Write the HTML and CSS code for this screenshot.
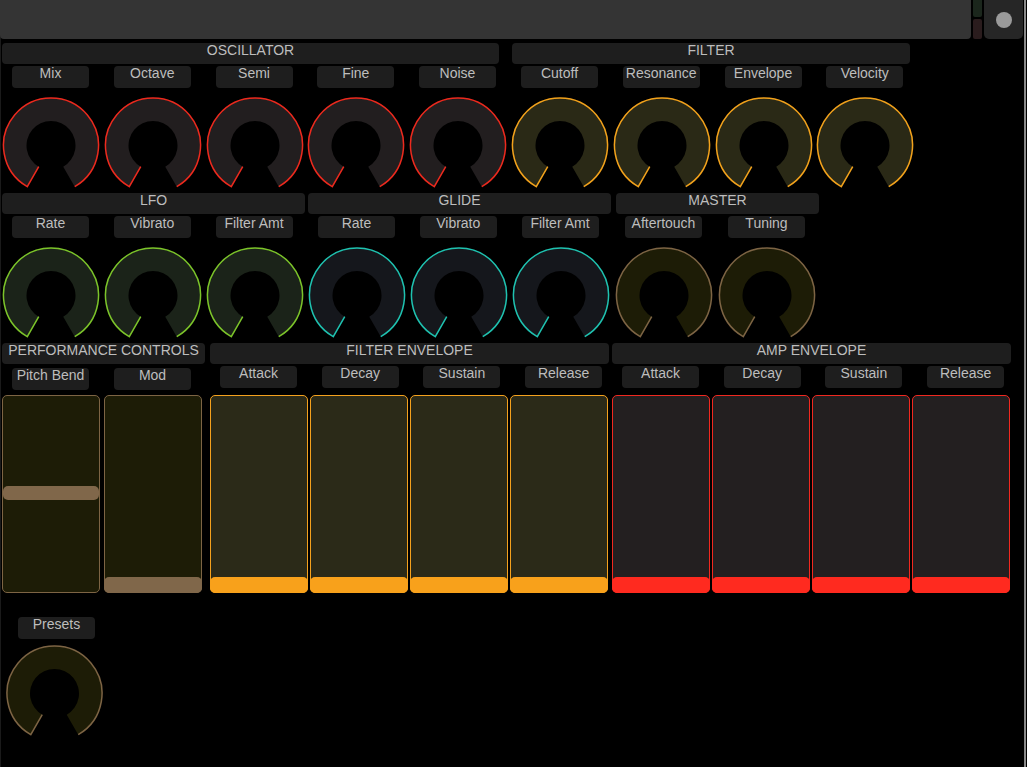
FILE: index.html
```html
<!DOCTYPE html>
<html lang="en">
<head>
    <meta charset="UTF-8">
    <meta name="viewport" content="width=device-width, initial-scale=1.0">
    <title>Synth Control Surface</title>
    <link rel="stylesheet" href="styles.css">
</head>
<body>
    <!-- forma del knob, se reutiliza con <use> -->
    <svg class="defs" aria-hidden="true">
        <symbol id="knob" viewBox="0 0 98 92">
            <path d="M36.75 69.72 L25.25 89.64 A47.5 47.5 0 1 1 72.75 89.64 L61.25 69.72 A24.5 24.5 0 1 0 36.75 69.72 Z"/>
            <path class="knob-edge" d="M36.75 69.72 L25.25 89.64 A47.5 47.5 0 1 1 72.75 89.64" fill="none" stroke="currentColor" stroke-width="1.5"/>
        </symbol>
    </svg>

    <div class="page">
        <div class="topbar">
            <div class="display"></div>
            <div class="meter"><span class="meter-top"></span><span class="meter-bottom"></span></div>
            <div class="power"><span class="dot"></span></div>
        </div>

        <!-- fila 1 -->
        <div class="row">
            <section class="group">
                <div class="header w-osc">OSCILLATOR</div>
                <div class="cells">
                    <div class="cell"><div class="label">Mix</div><svg class="knob red"><use href="#knob"/></svg></div>
                    <div class="cell"><div class="label">Octave</div><svg class="knob red"><use href="#knob"/></svg></div>
                    <div class="cell"><div class="label">Semi</div><svg class="knob red"><use href="#knob"/></svg></div>
                    <div class="cell"><div class="label">Fine</div><svg class="knob red"><use href="#knob"/></svg></div>
                    <div class="cell"><div class="label">Noise</div><svg class="knob red"><use href="#knob"/></svg></div>
                </div>
            </section>
            <section class="group group-filter">
                <div class="header w-filter">FILTER</div>
                <div class="cells">
                    <div class="cell"><div class="label">Cutoff</div><svg class="knob orange"><use href="#knob"/></svg></div>
                    <div class="cell"><div class="label">Resonance</div><svg class="knob orange"><use href="#knob"/></svg></div>
                    <div class="cell"><div class="label">Envelope</div><svg class="knob orange"><use href="#knob"/></svg></div>
                    <div class="cell"><div class="label">Velocity</div><svg class="knob orange"><use href="#knob"/></svg></div>
                </div>
            </section>
        </div>

        <!-- fila 2 -->
        <div class="row">
            <section class="group">
                <div class="header w-303">LFO</div>
                <div class="cells">
                    <div class="cell"><div class="label">Rate</div><svg class="knob green"><use href="#knob"/></svg></div>
                    <div class="cell"><div class="label">Vibrato</div><svg class="knob green"><use href="#knob"/></svg></div>
                    <div class="cell"><div class="label">Filter Amt</div><svg class="knob green"><use href="#knob"/></svg></div>
                </div>
            </section>
            <section class="group group-glide">
                <div class="header w-303">GLIDE</div>
                <div class="cells">
                    <div class="cell"><div class="label">Rate</div><svg class="knob cyan"><use href="#knob"/></svg></div>
                    <div class="cell"><div class="label">Vibrato</div><svg class="knob cyan"><use href="#knob"/></svg></div>
                    <div class="cell"><div class="label">Filter Amt</div><svg class="knob cyan"><use href="#knob"/></svg></div>
                </div>
            </section>
            <section class="group group-master">
                <div class="header w-master">MASTER</div>
                <div class="cells wide">
                    <div class="cell"><div class="label">Aftertouch</div><svg class="knob brown"><use href="#knob"/></svg></div>
                    <div class="cell"><div class="label">Tuning</div><svg class="knob brown"><use href="#knob"/></svg></div>
                </div>
            </section>
        </div>

        <!-- fila 3: faders -->
        <div class="row">
            <section class="group">
                <div class="header w-203">PERFORMANCE CONTROLS</div>
                <div class="cells perf">
                    <div class="cell">
                        <div class="label">Pitch Bend</div>
                        <div class="fader brown center"><span class="handle"></span></div>
                    </div>
                    <div class="cell">
                        <div class="label">Mod</div>
                        <div class="fader brown"><span class="bar"></span></div>
                    </div>
                </div>
            </section>
            <section class="group group-fenv">
                <div class="header w-399">FILTER ENVELOPE</div>
                <div class="labels">
                    <div class="label">Attack</div>
                    <div class="label">Decay</div>
                    <div class="label">Sustain</div>
                    <div class="label">Release</div>
                </div>
                <div class="faders">
                    <div class="fader orange"><span class="bar"></span></div>
                    <div class="fader orange"><span class="bar"></span></div>
                    <div class="fader orange"><span class="bar"></span></div>
                    <div class="fader orange"><span class="bar"></span></div>
                </div>
            </section>
            <section class="group group-aenv">
                <div class="header w-399">AMP ENVELOPE</div>
                <div class="labels">
                    <div class="label">Attack</div>
                    <div class="label">Decay</div>
                    <div class="label">Sustain</div>
                    <div class="label">Release</div>
                </div>
                <div class="faders">
                    <div class="fader red"><span class="bar"></span></div>
                    <div class="fader red"><span class="bar"></span></div>
                    <div class="fader red"><span class="bar"></span></div>
                    <div class="fader red"><span class="bar"></span></div>
                </div>
            </section>
        </div>

        <!-- presets -->
        <div class="presets">
            <div class="label">Presets</div>
            <svg class="knob brown"><use href="#knob"/></svg>
        </div>
    </div>
</body>
</html>
```

FILE: styles.css
```css
* {
    box-sizing: border-box;
}
body, html {
    margin: 0;
    padding: 0;
    background-color: #000;
}
body {
    font-family: "Liberation Sans", Arial, sans-serif;
    font-size: 14px;
    color: #bdbdbd;
    overflow: hidden;
}
.defs {
    position: absolute;
    width: 0;
    height: 0;
}
.page {
    width: 1026px;
    min-height: 767px;
    border-left: 1px solid #1a1a1a;
    border-right: 2px solid #8a8a8a;
    padding-left: 1px;
}

/* Barra superior */
.topbar {
    display: flex;
    height: 39px;
    margin-left: -2px;
}
.display {
    width: 971px;
    background-color: #343434;
    border-radius: 0 0 4px 4px;
}
.meter {
    width: 9px;
    margin-left: 2px;
    display: flex;
    flex-direction: column;
    gap: 2px;
}
.meter-top {
    height: 17px;
    background-color: #1b261c;
    border-radius: 0 0 2px 2px;
}
.meter-bottom {
    flex: 1;
    background-color: #2a1c1d;
    border-radius: 2px;
}
.power {
    width: 39px;
    margin-left: 2px;
    background-color: #262626;
    border-radius: 0 0 5px 5px;
    display: flex;
    align-items: center;
    justify-content: center;
}
.dot {
    width: 16px;
    height: 16px;
    border-radius: 50%;
    background-color: #9a9a9a;
}

/* Filas y grupos */
.row {
    display: flex;
    align-items: flex-start;
    margin-top: 4px;
}
.group {
    display: flex;
    flex-direction: column;
    align-items: flex-start;
}
.group-filter { margin-left: 4px; }
.group-filter .header { margin-left: 1px; }
.group-glide { margin-left: 3px; }
.group-master { margin-left: 4px; }
.group-master .header { margin-left: 1px; }
.group-fenv { margin-left: 5px; }
.group-aenv { margin-left: 3px; }

.header {
    height: 21px;
    line-height: 15px;
    text-align: center;
    background-color: #1e1e1e;
    border-radius: 4px;
    white-space: nowrap;
}
.w-osc { width: 497px; }
.w-filter { width: 398px; }
.w-303 { width: 303px; }
.w-master { width: 203px; }
.w-203 { width: 203px; }
.w-399 { width: 399px; }

.label {
    width: 77px;
    height: 22px;
    line-height: 15px;
    text-align: center;
    background-color: #1e1e1e;
    border-radius: 4px;
    white-space: nowrap;
}

.cells {
    display: flex;
    gap: 3.75px;
}
.cells.wide { gap: 5px; }
.cells.perf { gap: 4px; }
.cell {
    display: flex;
    flex-direction: column;
    align-items: flex-start;
}
.cell .label {
    margin: 2px 0 9px 10px;
}
.cells.perf .label {
    margin: 4px 0 5px 10px;
}

/* Knobs */
.knob {
    width: 98px;
    height: 92px;
    display: block;
}
.knob.red { fill: #221e1f; color: #ec2a1e; }
.knob.orange { fill: #2a2916; color: #f2a21c; }
.knob.green { fill: #1b2319; color: #7cc42a; }
.knob.cyan { fill: #15171c; color: #1fc2b0; }
.knob.brown { fill: #1d1c06; color: #7d6444; }

/* Faders */
.labels {
    display: flex;
    gap: 24.7px;
    margin: 2px 0 7px 10px;
}
.faders {
    display: flex;
    gap: 2px;
}
.fader {
    width: 98px;
    height: 198px;
    border: 1px solid;
    border-radius: 5px;
    display: flex;
    flex-direction: column;
    justify-content: flex-end;
}
.fader.center {
    justify-content: center;
}
.fader .bar {
    height: 16px;
    margin: 0 -1px -1px;
    border-radius: 5px;
}
.fader .handle {
    height: 14px;
    margin: 0 0 2px;
    border-radius: 5px;
}
.fader.brown { background-color: #1d1c06; border-color: #7d6444; }
.fader.brown .bar, .fader.brown .handle { background-color: #80674a; }
.fader.orange { background-color: #2b2a18; border-color: #f4a11d; }
.fader.orange .bar { background-color: #f8a11b; }
.fader.red { background-color: #231f20; border-color: #f0281f; }
.fader.red .bar { background-color: #ff2a1f; }

/* Presets */
.presets {
    display: flex;
    flex-direction: column;
    align-items: flex-start;
    margin-top: 24px;
}
.presets .label {
    margin: 0 0 6px 16px;
}
.presets .knob {
    margin-left: 3px;
    width: 99px;
}
```
